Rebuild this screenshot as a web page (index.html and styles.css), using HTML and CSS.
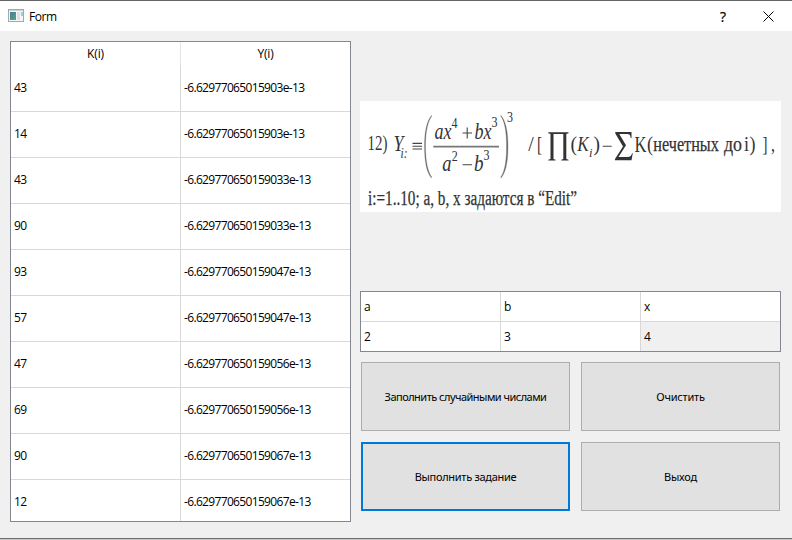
FILE: index.html
```html
<!DOCTYPE html>
<html lang="ru">
<head>
<meta charset="utf-8">
<title>Form</title>
<link rel="stylesheet" href="styles.css">
</head>
<body>
<div class="window">
  <header class="titlebar">
    <svg class="app-icon" width="16" height="14" viewBox="0 0 16 14">
      <defs><linearGradient id="g" x1="0" y1="0" x2="1" y2="1"><stop offset="0" stop-color="#4778a0"/><stop offset="1" stop-color="#55aa75"/></linearGradient></defs>
      <rect x=".5" y=".5" width="15" height="12" fill="#f4f5f6" stroke="#a3a8ad"/>
      <path d="M1 1.5h14" stroke="#c9d0d6"/>
      <rect x="2" y="3" width="6" height="8" fill="url(#g)"/>
      <rect x="9" y="3" width="3" height="8" fill="#dfe2e4"/>
      <rect x="13" y="3" width="2" height="4" fill="#a9c8cf"/>
    </svg>
    <span class="title">Form</span>
    <span class="help">?</span>
    <svg class="close" width="11" height="11" viewBox="0 0 11 11"><path d="M.5 .5l10 10M10.5 .5l-10 10" stroke="#000" stroke-width="1"/></svg>
  </header>
  <main class="content">
    <section class="results">
      <div class="head"><span>K(i)</span><span>Y(i)</span></div>
      <div class="row"><span>43</span><span>-6.62977065015903e-13</span></div>
      <div class="row"><span>14</span><span>-6.62977065015903e-13</span></div>
      <div class="row"><span>43</span><span>-6.629770650159033e-13</span></div>
      <div class="row"><span>90</span><span>-6.629770650159033e-13</span></div>
      <div class="row"><span>93</span><span>-6.629770650159047e-13</span></div>
      <div class="row"><span>57</span><span>-6.629770650159047e-13</span></div>
      <div class="row"><span>47</span><span>-6.629770650159056e-13</span></div>
      <div class="row"><span>69</span><span>-6.629770650159056e-13</span></div>
      <div class="row"><span>90</span><span>-6.629770650159067e-13</span></div>
      <div class="row"><span>12</span><span>-6.629770650159067e-13</span></div>
    </section>
    <section class="side">
      <svg class="formula" width="421" height="111" viewBox="0 0 421 111">
        <text x="7.5" y="49" font-size="21" textLength="20" lengthAdjust="spacingAndGlyphs">12)</text>
        <text class="it" x="33.5" y="50" font-size="23" textLength="10" lengthAdjust="spacingAndGlyphs">Y</text>
        <text class="it" x="40.5" y="57" font-size="14" textLength="7" lengthAdjust="spacingAndGlyphs">i:</text>
        <text class="it" x="74.5" y="37.5" font-size="24" textLength="17" lengthAdjust="spacingAndGlyphs">ax</text>
        <text x="91.5" y="26.7" font-size="15" textLength="6" lengthAdjust="spacingAndGlyphs">4</text>
        <text class="it" x="114.5" y="37.5" font-size="24" textLength="17" lengthAdjust="spacingAndGlyphs">bx</text>
        <text x="131.5" y="26" font-size="15" textLength="6" lengthAdjust="spacingAndGlyphs">3</text>
        <text class="it" x="82.3" y="70" font-size="24" textLength="9.2" lengthAdjust="spacingAndGlyphs">a</text>
        <text x="91.7" y="59.5" font-size="15" textLength="6" lengthAdjust="spacingAndGlyphs">2</text>
        <text class="it" x="114" y="70" font-size="24" textLength="9.5" lengthAdjust="spacingAndGlyphs">b</text>
        <text x="123.5" y="59" font-size="15" textLength="6" lengthAdjust="spacingAndGlyphs">3</text>
        <text x="147" y="20.5" font-size="15" textLength="6" lengthAdjust="spacingAndGlyphs">3</text>
        <text x="168.3" y="49.5" font-size="21" textLength="5.5" lengthAdjust="spacingAndGlyphs">/</text>
        <text x="177" y="49.5" font-size="21" textLength="5" lengthAdjust="spacingAndGlyphs">[</text>
        <text x="210.5" y="50" font-size="22" textLength="6.500" lengthAdjust="spacingAndGlyphs">(</text>
        <text class="it" x="217.3" y="50" font-size="22" textLength="11.5" lengthAdjust="spacingAndGlyphs">K</text>
        <text class="it" x="229" y="56" font-size="13" textLength="3.5" lengthAdjust="spacingAndGlyphs">i</text>
        <text x="233.5" y="50" font-size="22" textLength="6.5" lengthAdjust="spacingAndGlyphs">)</text>
        <text x="274.5" y="50.5" font-size="23" textLength="12" lengthAdjust="spacingAndGlyphs">K</text>
        <text x="287" y="50" font-size="22" textLength="6" lengthAdjust="spacingAndGlyphs">(</text>
        <text class="bold" x="293.300" y="50" font-size="21" textLength="65.500" lengthAdjust="spacingAndGlyphs">нечетных</text>
        <text class="bold" x="364" y="50" font-size="21" textLength="18" lengthAdjust="spacingAndGlyphs">до</text>
        <text x="384" y="50" font-size="21" textLength="5" lengthAdjust="spacingAndGlyphs">i</text>
        <text x="389.5" y="50" font-size="22" textLength="6" lengthAdjust="spacingAndGlyphs">)</text>
        <text x="402.5" y="49.5" font-size="21" textLength="5" lengthAdjust="spacingAndGlyphs">]</text>
        <text x="411" y="50" font-size="21" textLength="4" lengthAdjust="spacingAndGlyphs">,</text>
        <text class="bold" x="8" y="104" font-size="20" textLength="209" lengthAdjust="spacingAndGlyphs">i:=1..10; a, b, x задаются в “Edit”</text>
        <path class="stroke" d="M52.5 42.4h9.5M52.5 45.2h9.5M52.5 48h9.5"/>
        <path class="stroke" d="M102.5 32h9.5M107.2 26.5v11M102.5 63.8h9.5M242.7 45.3h9"/>
        <path class="bar" d="M73.3 45.7H139"/>
        <path class="paren" d="M72 14.8C68 20 65.5 30 65.5 45.5S68 71 72 76.4L71 76.6C67 71 64.5 62 64.5 45.5S67 20 71.5 14.5ZM140.5 14.8C144.5 20 146.5 30 146.5 45.5S144.5 71 140.5 76.4L141.5 76.6C145.5 71 148 62 148 45.5S145.5 20 141 14.5Z"/>
        <path class="ink" d="M188.3 31.3H208.5V32.3L206.3 33V58L208.5 58.7V59.5H201.3V58.7L203.3 58V33H193.5V58L195.5 58.7V59.5H188.3V58.7L190.5 58V33L188.3 32.3Z"/>
        <path class="ink" d="M255.3 31H271.5V37H270.7C270.3 33.8 269.5 33 266.5 33H259.3L266 44.2L258.5 56H267.5C270.5 56 271.3 55 272 52.3H272.8L271.5 59.3H255V58L263 45.5L255.3 32.5Z"/>
      </svg>
      <div class="params">
        <span>a</span><span>b</span><span>x</span>
        <span>2</span><span>3</span><span class="selected">4</span>
      </div>
      <div class="actions">
        <button class="long">Заполнить случайными числами</button>
        <button>Очистить</button>
        <button class="focus">Выполнить задание</button>
        <button>Выход</button>
      </div>
    </section>
  </main>
</div>
</body>
</html>
```
FILE: styles.css
```css
* { box-sizing: border-box; }
body {
  margin: 0;
  background: #c8c8c8;
  font: 12px "Open Sans", "Noto Sans", sans-serif;
  color: #000;
}
.window {
  width: 792px;
  height: 539px;
  border-top: 1px solid #646464;
  border-bottom: 1px solid #6e6e6e;
  background: #f0f0f0;
}
.titlebar {
  display: flex;
  align-items: center;
  height: 30px;
  padding: 0 18px 0 8px;
  background: #fff;
}
.title { margin-left: 5px; letter-spacing: -0.4px; }
.help { margin-left: auto; margin-right: 37px; font-size: 14px; -webkit-text-stroke: 0.2px #000; }
.content { display: flex; gap: 9px; padding: 10px 11px 0 10px; }
.results {
  width: 341px;
  height: 481px;
  overflow: hidden;
  border: 1px solid #828790;
  background: #fff;
}
.head, .row { display: grid; grid-template-columns: 170px 169px; }
.head { height: 23px; line-height: 24px; text-align: center; letter-spacing: -0.15px; }
.head span:first-child { border-right: 1px solid #e5e5e5; }
.row { height: 46px; line-height: 46px; letter-spacing: -0.66px; }
.row span { padding-left: 3px; border-bottom: 1px solid #d8d8d8; }
.row span:first-child { border-right: 1px solid #d8d8d8; }
.side { width: 421px; padding-top: 60px; }
.formula { display: block; background: #fff; font-family: "Liberation Serif", serif; fill: #333; }
.it { font-style: italic; }
.bold { stroke: #333; stroke-width: 0.25; }
.stroke { stroke: #444; stroke-width: 1.1; fill: none; }
.bar { stroke: #777; stroke-width: 1.7; }
.paren { fill: #666; stroke: #777; stroke-width: 0.3; }
.ink { fill: #333; }
.params {
  display: grid;
  grid-template-columns: 140px 140px 139px;
  grid-template-rows: 30px 29px;
  height: 61px;
  margin-top: 79px;
  border: 1px solid #828790;
  background: #fff;
  line-height: 30px;
}
.params span { padding-left: 3px; border-right: 1px solid #d8d8d8; }
.params span:nth-child(3n) { border-right: 0; }
.params span:nth-child(-n+3) { border-bottom: 1px solid #d8d8d8; }
.params .selected { background: #f0f0f0; }
.actions {
  display: grid;
  grid-template-columns: 209px 199px;
  grid-template-rows: 69px 69px;
  gap: 11px;
  margin: 10px 0 0 1px;
}
button {
  padding: 0;
  border: 1px solid #adadad;
  background: #e1e1e1;
  color: #000;
  font: 11px "Noto Sans", sans-serif;
  letter-spacing: -0.2px;
}
.long { letter-spacing: -0.52px; }
.focus { border: 2px solid #0078d7; letter-spacing: -0.3px; }
```
